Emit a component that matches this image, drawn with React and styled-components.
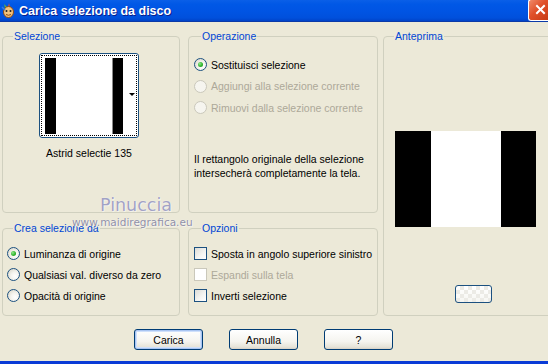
import React from "react";
import styled, { createGlobalStyle } from "styled-components";

const GlobalStyle = createGlobalStyle`
  html, body {
    margin: 0;
    padding: 0;
    background: #ece9d8;
  }
  body {
    font-family: "Liberation Sans", Arial, sans-serif;
    font-size: 10.5px;
    color: #000;
  }
`;

const Window = styled.div`
  position: relative;
  width: 548px;
  height: 364px;
  overflow: hidden;
  background: #ece9d8;
  display: flex;
  flex-direction: column;
  box-sizing: border-box;
  border-bottom: 3px solid #0a3bd6;
`;

const TitleBar = styled.div`
  height: 21px;
  flex: 0 0 21px;
  display: flex;
  align-items: center;
  padding-left: 1px;
  background: linear-gradient(
    to bottom,
    #0a5fe8 0%,
    #0058e6 20%,
    #0054e3 55%,
    #0050dc 85%,
    #0043c8 100%
  );
  border-bottom: 1px solid #0b3aa8;
`;

const Title = styled.span`
  margin-left: 3px;
  font-family: "Liberation Sans", Arial, sans-serif;
  font-weight: bold;
  font-size: 12.5px;
  color: #fff;
  text-shadow: 1px 1px 0 #0a1e8c;
  flex: 1;
`;

const CloseBtn = styled.div`
  width: 16px;
  height: 20px;
  margin-top: -2px;
  background: linear-gradient(135deg, #f08a6a 0%, #e0502a 45%, #c83a12 100%);
  border: 1px solid #fff;
  border-right: none;
  border-radius: 3px 0 0 3px;
  display: flex;
  align-items: center;
  justify-content: center;
  padding-left: 3px;
`;

const Body = styled.div`
  display: flex;
  padding: 8px 0 0 2px;
  height: 286px;
  box-sizing: content-box;
`;

const LeftGrid = styled.div`
  display: grid;
  grid-template-columns: 178px 190px;
  grid-template-rows: 183px 1fr;
  column-gap: 8px;
  row-gap: 9px;
`;

const Group = styled.fieldset`
  margin: 0;
  padding: 0 ${(p) => p.$padRight || 0}px 0 ${(p) => p.$padLeft || 4}px;
  border: 1px solid #d0d0bf;
  border-radius: 4px;
  min-width: 0;
  box-sizing: border-box;
  height: 100%;
  display: flex;
  flex-direction: column;
  align-items: ${(p) => (p.$center ? "center" : "stretch")};
  ${(p) => p.$width && `width: ${p.$width}px; flex: 0 0 ${p.$width}px;`}
  ${(p) => p.$gapLeft && `margin-left: ${p.$gapLeft}px;`}
`;

const Legend = styled.legend`
  padding: 0 1px;
  margin-left: ${(p) => p.$offset || 5}px;
  color: #0046d5;
  line-height: 13px;
  font-size: 10.5px;
`;

const Thumb = styled.div`
  margin-top: 10px;
  width: 100px;
  height: 85px;
  box-sizing: border-box;
  border: 1px solid #1c5180;
  border-radius: 3px;
  background: #fff;
  padding: 1px;
`;

const ThumbInner = styled.div`
  height: 100%;
  box-sizing: border-box;
  border: 1px dotted #000;
  display: flex;
  padding: 2px 0 1px 3px;
`;

const Stripe = styled.div`
  width: ${(p) => p.$w}px;
  background: ${(p) => p.$c};
  flex: 0 0 auto;
`;

const ArrowCell = styled.div`
  flex: 1;
  display: flex;
  align-items: center;
  justify-content: flex-end;
  padding-right: 1px;
  padding-bottom: 4px;
`;

const Arrow = styled.div`
  width: 0;
  height: 0;
  border-left: 3px solid transparent;
  border-right: 3px solid transparent;
  border-top: 3px solid #000;
`;

const Caption = styled.div`
  margin-top: 9px;
  line-height: 13px;
`;

const Rows = styled.div`
  display: flex;
  flex-direction: column;
  margin-top: ${(p) => p.$top}px;
`;

const Row = styled.label`
  display: flex;
  align-items: center;
  height: ${(p) => p.$h || 21}px;
  color: ${(p) => (p.$disabled ? "#aca899" : "#000")};
  white-space: nowrap;
`;

const Radio = styled.span`
  width: 13px;
  height: 13px;
  box-sizing: border-box;
  border-radius: 50%;
  border: 1px solid ${(p) => (p.$disabled ? "#cac8bb" : "#1c5180")};
  background: ${(p) =>
    p.$disabled
      ? "#f6f5ef"
      : "radial-gradient(circle at 65% 65%, #ffffff 0%, #f4f3ee 40%, #d4d1c2 100%)"};
  margin-right: 4px;
  display: flex;
  align-items: center;
  justify-content: center;
  flex: 0 0 auto;

  &::after {
    content: "";
    display: ${(p) => (p.$checked ? "block" : "none")};
    width: 5px;
    height: 5px;
    border-radius: 50%;
    background: radial-gradient(circle at 35% 35%, #8ee88a 0%, #31b52d 55%, #1a8a17 100%);
  }
`;

const Check = styled.span`
  width: 13px;
  height: 13px;
  box-sizing: border-box;
  border: 1px solid ${(p) => (p.$disabled ? "#cac8bb" : "#1c5180")};
  background: ${(p) =>
    p.$disabled ? "#ffffff" : "linear-gradient(135deg, #dcdcd7 0%, #f5f5f2 60%, #ffffff 100%)"};
  margin-right: 4px;
  flex: 0 0 auto;
`;

const Note = styled.p`
  margin: 33px 0 0 0;
  line-height: 14px;
`;

const Preview = styled.div`
  margin-top: 88px;
  margin-left: 7px;
  width: 141px;
  height: 96px;
  display: flex;
`;

const PreviewBar = styled.div`
  width: ${(p) => p.$w}px;
  background: ${(p) => p.$c};
`;

const TransBtn = styled.div`
  margin: 58px 0 0 67px;
  width: 37px;
  height: 18px;
  box-sizing: border-box;
  border: 1px solid #1c5180;
  border-radius: 3px;
  background:
    linear-gradient(45deg, #ecebe6 25%, transparent 25%, transparent 75%, #ecebe6 75%),
    linear-gradient(45deg, #ecebe6 25%, transparent 25%, transparent 75%, #ecebe6 75%),
    linear-gradient(#ffffff, #f6f6f2);
  background-size: 8px 8px, 8px 8px, 100% 100%;
  background-position: 0 0, 4px 4px, 0 0;
`;

const ButtonBar = styled.div`
  display: flex;
  gap: 26px;
  padding: 13px 0 0 134px;
`;

const Button = styled.button`
  width: 69px;
  height: 21px;
  padding: 0;
  border: 1px solid #003c74;
  border-radius: 3px;
  font-family: "Liberation Sans", Arial, sans-serif;
  font-size: 10.5px;
  color: #000;
  background: linear-gradient(to bottom, #ffffff 0%, #f5f4ef 60%, #e6e3d8 90%, #d6d0c5 100%);
  box-shadow: ${(p) =>
    p.$default ? "inset 0 0 0 1px #a9c5f2, inset 0 0 0 2px #cfe0fb" : "none"};
`;

const Watermark = styled.div`
  position: absolute;
  left: ${(p) => p.$x}px;
  top: ${(p) => p.$y}px;
  font-family: "DejaVu Sans", Verdana, sans-serif;
  font-size: ${(p) => p.$size}px;
  color: ${(p) => p.$color};
  text-shadow: 0 0 1px #ffffff, 1px 1px 0 #f4f2ea;
  pointer-events: none;
  white-space: nowrap;
`;

function AppIcon() {
  return (
    <svg width="15" height="17" viewBox="0 0 15 17">
      <path d="M3 2 L6 5 L4 6 Z" fill="#5fb83a" />
      <path d="M8 1 L9 5 L7 5 Z" fill="#e84c2b" />
      <ellipse cx="7.5" cy="10" rx="5" ry="5.5" fill="#f2c27a" stroke="#8a4b18" strokeWidth="1" />
      <circle cx="5.5" cy="9" r="1" fill="#222" />
      <circle cx="9.5" cy="9" r="1" fill="#222" />
      <path d="M5 12.5 Q7.5 14 10 12.5" stroke="#8a4b18" strokeWidth="1" fill="none" />
      <path d="M1 5 L4 8" stroke="#3a7fd8" strokeWidth="1.5" />
    </svg>
  );
}

function CloseIcon() {
  return (
    <svg width="11" height="11" viewBox="0 0 11 11">
      <path d="M2 2 L9 9 M9 2 L2 9" stroke="#fff" strokeWidth="2" strokeLinecap="square" />
    </svg>
  );
}

const operations = [
  { label: "Sostituisci selezione", checked: true },
  { label: "Aggiungi alla selezione corrente", disabled: true },
  { label: "Rimuovi dalla selezione corrente", disabled: true },
];

const sources = [
  { label: "Luminanza di origine", checked: true },
  { label: "Qualsiasi val. diverso da zero" },
  { label: "Opacità di origine" },
];

const options = [
  { label: "Sposta in angolo superiore sinistro" },
  { label: "Espandi sulla tela", disabled: true },
  { label: "Inverti selezione" },
];

export default function App() {
  return (
    <>
      <GlobalStyle />
      <Window>
        <TitleBar>
          <AppIcon />
          <Title>Carica selezione da disco</Title>
          <CloseBtn>
            <CloseIcon />
          </CloseBtn>
        </TitleBar>

        <Body>
          <LeftGrid>
            <Group $center $padRight={8}>
              <Legend $offset={6}>Selezione</Legend>
              <Thumb>
                <ThumbInner>
                  <Stripe $w={11} $c="#000" />
                  <Stripe $w={56} $c="#fff" />
                  <Stripe $w={1} $c="#8a8a8a" />
                  <Stripe $w={10} $c="#000" />
                  <ArrowCell>
                    <Arrow />
                  </ArrowCell>
                </ThumbInner>
              </Thumb>
              <Caption>Astrid selectie 135</Caption>
            </Group>

            <Group $padLeft={5}>
              <Legend $offset={7}>Operazione</Legend>
              <Rows $top={11}>
                {operations.map((o) => (
                  <Row key={o.label} $disabled={o.disabled} $h={21.5}>
                    <Radio $checked={o.checked} $disabled={o.disabled} />
                    {o.label}
                  </Row>
                ))}
              </Rows>
              <Note>
                Il rettangolo originale della selezione
                <br />
                intersecherà completamente la tela.
              </Note>
            </Group>

            <Group $padLeft={4}>
              <Legend $offset={6}>Crea selezione da</Legend>
              <Rows $top={8}>
                {sources.map((o) => (
                  <Row key={o.label}>
                    <Radio $checked={o.checked} />
                    {o.label}
                  </Row>
                ))}
              </Rows>
            </Group>

            <Group $padLeft={5}>
              <Legend $offset={7}>Opzioni</Legend>
              <Rows $top={8}>
                {options.map((o) => (
                  <Row key={o.label} $disabled={o.disabled}>
                    <Check $disabled={o.disabled} />
                    {o.label}
                  </Row>
                ))}
              </Rows>
            </Group>
          </LeftGrid>

          <Group $width={170} $gapLeft={5} $padLeft={4}>
            <Legend $offset={6}>Anteprima</Legend>
            <Preview>
              <PreviewBar $w={36} $c="#000" />
              <PreviewBar $w={70} $c="#fff" />
              <PreviewBar $w={35} $c="#000" />
            </Preview>
            <TransBtn />
          </Group>
        </Body>

        <ButtonBar>
          <Button $default>Carica</Button>
          <Button>Annulla</Button>
          <Button>?</Button>
        </ButtonBar>

        <Watermark $x={100} $y={195} $size={17.5} $color="#a2a2c4">
          Pinuccia
        </Watermark>
        <Watermark $x={72} $y={216} $size={10.5} $color="#8f8fa6">
          www.maidiregrafica.eu
        </Watermark>
      </Window>
    </>
  );
}
